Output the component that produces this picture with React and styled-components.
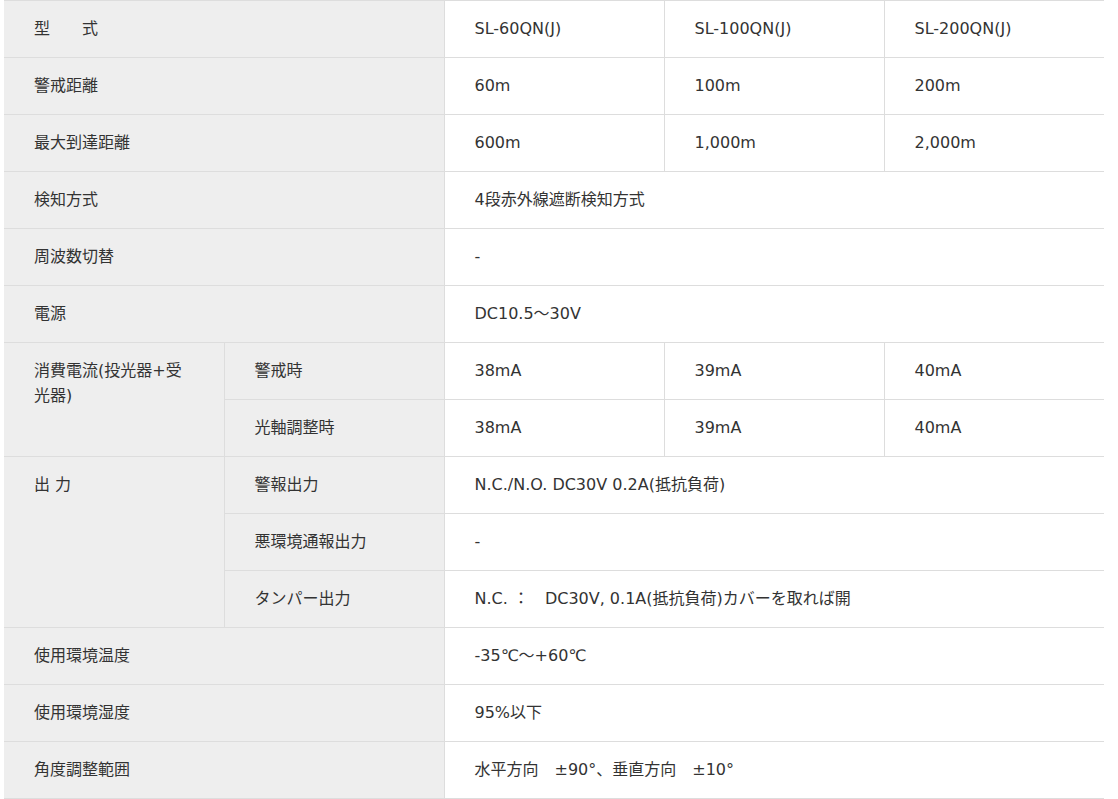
import React from "react";
import styled, { createGlobalStyle } from "styled-components";

const GlobalStyle = createGlobalStyle`
  body {
    margin: 0;
    background: #fff;
    font-family: "DejaVu Sans", "Noto Sans CJK JP", sans-serif;
    color: #333;
  }
`;

const Wrapper = styled.div`
  padding: 0 4px;
  width: 1100px;
`;

const SpecTable = styled.table`
  width: 1100px;
  table-layout: fixed;
  border-collapse: collapse;
  border-top: 1px solid #ddd;
  font-size: 16px;
  line-height: 25px;
`;

const Col = styled.col`
  width: 20%;
`;

const Row = styled.tr`
  border-bottom: 1px solid #ddd;
`;

const Head = styled.th`
  background: #eee;
  font-weight: 400;
  text-align: left;
  vertical-align: top;
  height: 25px;
  padding: 15px 30px 16px;
  border-left: ${(p) => (p.$sub ? "1px solid #ddd" : "none")};
`;

const Cell = styled.td`
  background: #fff;
  text-align: left;
  vertical-align: top;
  padding: 15px 30px 16px;
  border-left: 1px solid #ddd;
  white-space: nowrap;
`;

const specs = [
  { label: "型　　式", values: ["SL-60QN(J)", "SL-100QN(J)", "SL-200QN(J)"] },
  { label: "警戒距離", values: ["60m", "100m", "200m"] },
  { label: "最大到達距離", values: ["600m", "1,000m", "2,000m"] },
  { label: "検知方式", values: ["4段赤外線遮断検知方式"] },
  { label: "周波数切替", values: ["-"] },
  { label: "電源", values: ["DC10.5～30V"] },
];

const groups = [
  {
    label: "消費電流(投光器+受光器)",
    rows: [
      { label: "警戒時", values: ["38mA", "39mA", "40mA"] },
      { label: "光軸調整時", values: ["38mA", "39mA", "40mA"] },
    ],
  },
  {
    label: "出 力",
    rows: [
      { label: "警報出力", values: ["N.C./N.O. DC30V 0.2A(抵抗負荷)"] },
      { label: "悪環境通報出力", values: ["-"] },
      { label: "タンパー出力", values: ["N.C. ：　DC30V, 0.1A(抵抗負荷)カバーを取れば開"] },
    ],
  },
];

const tail = [
  { label: "使用環境温度", values: ["-35℃～+60℃"] },
  { label: "使用環境湿度", values: ["95%以下"] },
  { label: "角度調整範囲", values: ["水平方向　±90°、垂直方向　±10°"] },
];

function renderValues(values) {
  if (values.length === 1) return <Cell colSpan={3}>{values[0]}</Cell>;
  return values.map((v, i) => <Cell key={i}>{v}</Cell>);
}

function renderSimple(rows) {
  return rows.map((r) => (
    <Row key={r.label}>
      <Head colSpan={2}>{r.label}</Head>
      {renderValues(r.values)}
    </Row>
  ));
}

const App = () => {
  return (
    <Wrapper>
      <GlobalStyle />
      <SpecTable>
        <colgroup>
          <Col />
          <Col />
          <Col />
          <Col />
          <Col />
        </colgroup>
        <tbody>
          {renderSimple(specs)}
          {groups.map((g) =>
            g.rows.map((r, i) => (
              <Row key={g.label + r.label}>
                {i === 0 && <Head rowSpan={g.rows.length}>{g.label}</Head>}
                <Head $sub>{r.label}</Head>
                {renderValues(r.values)}
              </Row>
            ))
          )}
          {renderSimple(tail)}
        </tbody>
      </SpecTable>
    </Wrapper>
  );
};

export default App;
